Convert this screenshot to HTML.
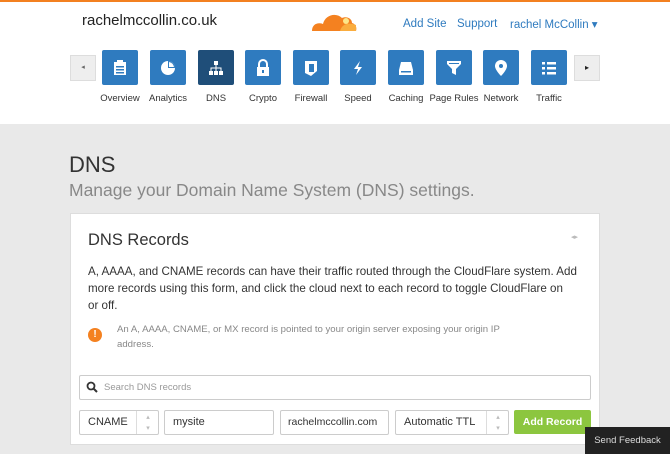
<!DOCTYPE html>
<html><head><style>
*{margin:0;padding:0;box-sizing:border-box}
body{width:670px;height:454px;overflow:hidden;font-family:"Liberation Sans",sans-serif;background:#e9e9e9;position:relative}
.a{position:absolute}
.hdr{left:0;top:0;width:670px;height:124px;background:#fff;border-top:2px solid #f38020}
.tile{width:36px;height:35px;top:50px;background:#2f7bbf;border-radius:2px}
.tile svg{position:absolute;left:9px;top:9px}
.lbl{top:93px;font-size:9.5px;color:#333;width:60px;text-align:center}
.box{background:#fff;border:1px solid #ccc;border-radius:2px;height:25px;top:410px;font-size:11px;color:#333;line-height:23px;padding-left:8px}
</style></head><body>
<div class="a hdr"></div>
<div class="a" style="left:82px;top:12px;font-size:15px;color:#222">rachelmccollin.co.uk</div>
<svg class="a" style="left:310px;top:9px" width="48" height="24" viewBox="0 0 48 24"><path d="M2 22 C2 15 8 13 13 15 C15 6 26 3 32 9 C36 7 42 9 42 14 C46 15 47 19 46 22 Z" fill="#f48120"/><path d="M30 22 C32 15 38 13 46 16 L46 22Z" fill="#faad3f"/><circle cx="36" cy="12" r="3" fill="#fde68a"/></svg>
<div class="a" style="left:403px;top:18px;font-size:11.5px;color:#2f7bbf">Add Site</div>
<div class="a" style="left:457px;top:18px;font-size:11.5px;color:#2f7bbf">Support</div>
<div class="a" style="left:510px;top:17px;font-size:11.5px;color:#2f7bbf">rachel McCollin ▾</div>
<div class="a" style="left:70px;top:55px;width:26px;height:26px;background:#eee;border:1px solid #ddd;font-size:7px;color:#666;text-align:center;line-height:24px">◂</div>
<div class="a" style="left:574px;top:55px;width:26px;height:26px;background:#eee;border:1px solid #ddd;font-size:8px;color:#222;text-align:center;line-height:24px">▸</div>

<div class="a tile" style="left:102px"><svg width="18" height="18"><rect x="3" y="3" width="12" height="13" fill="#fff"/><rect x="6" y="1" width="6" height="3" fill="#fff"/><rect x="5" y="7" width="8" height="1.5" fill="#2f7bbf"/><rect x="5" y="10" width="8" height="1.5" fill="#2f7bbf"/><rect x="5" y="13" width="8" height="1.5" fill="#2f7bbf"/></svg></div>
<div class="a tile" style="left:150px"><svg width="18" height="18"><circle cx="9" cy="9" r="7" fill="#fff"/><path d="M9 9V2A7 7 0 0 1 16 9Z" fill="#2f7bbf"/><path d="M10 8V3A6 6 0 0 1 15 8Z" fill="#fff"/></svg></div>
<div class="a tile" style="left:198px;background:#1f4e79"><svg width="18" height="18" fill="#fff"><rect x="7" y="2" width="4" height="4"/><rect x="2" y="12" width="4" height="4"/><rect x="7" y="12" width="4" height="4"/><rect x="12" y="12" width="4" height="4"/><rect x="8.5" y="6" width="1" height="6"/><rect x="3.5" y="8.5" width="11" height="1"/><rect x="3.5" y="8.5" width="1" height="4"/><rect x="13.5" y="8.5" width="1" height="4"/></svg></div>
<div class="a tile" style="left:245px"><svg width="18" height="18"><path d="M5 8V5a4 4 0 0 1 8 0v3" stroke="#fff" stroke-width="2" fill="none"/><rect x="3" y="8" width="12" height="9" fill="#fff"/><rect x="8" y="11" width="2" height="3" fill="#2f7bbf"/></svg></div>
<div class="a tile" style="left:293px"><svg width="18" height="18"><path d="M3 2h12v10l-6 5-6-3z" fill="#fff"/><rect x="7" y="5" width="5" height="8" fill="#2f7bbf"/></svg></div>
<div class="a tile" style="left:340px"><svg width="18" height="18"><path d="M11 2L5 10h4l-2 6 6-8H9z" fill="#fff"/></svg></div>
<div class="a tile" style="left:388px"><svg width="18" height="18"><path d="M4 3h10l2 8v5H2v-5z" fill="#fff"/><rect x="4" y="12" width="10" height="1.5" fill="#2f7bbf"/></svg></div>
<div class="a tile" style="left:436px"><svg width="18" height="18"><path d="M2 2h14v3l-5 5v6l-4-2v-4L2 5z" fill="#fff"/><rect x="4" y="4" width="10" height="1" fill="#2f7bbf"/></svg></div>
<div class="a tile" style="left:483px"><svg width="18" height="18"><path d="M9 1a6 6 0 0 1 6 6c0 4-6 10-6 10S3 11 3 7a6 6 0 0 1 6-6z" fill="#fff"/><circle cx="9" cy="7" r="2" fill="#2f7bbf"/></svg></div>
<div class="a tile" style="left:531px"><svg width="18" height="18" fill="#fff"><rect x="2" y="3" width="3" height="2.5"/><rect x="7" y="3" width="9" height="2.5"/><rect x="2" y="8" width="3" height="2.5"/><rect x="7" y="8" width="9" height="2.5"/><rect x="2" y="13" width="3" height="2.5"/><rect x="7" y="13" width="9" height="2.5"/></svg></div>

<div class="a lbl" style="left:90px">Overview</div>
<div class="a lbl" style="left:138px">Analytics</div>
<div class="a lbl" style="left:186px">DNS</div>
<div class="a lbl" style="left:233px">Crypto</div>
<div class="a lbl" style="left:281px">Firewall</div>
<div class="a lbl" style="left:328px">Speed</div>
<div class="a lbl" style="left:376px">Caching</div>
<div class="a lbl" style="left:424px">Page Rules</div>
<div class="a lbl" style="left:471px">Network</div>
<div class="a lbl" style="left:519px">Traffic</div>

<div class="a" style="left:69px;top:152px;font-size:22px;color:#333">DNS</div>
<div class="a" style="left:69px;top:180px;font-size:17.5px;color:#888">Manage your Domain Name System (DNS) settings.</div>

<div class="a" style="left:70px;top:213px;width:530px;height:232px;background:#fff;border:1px solid #ddd"></div>
<div class="a" style="left:88px;top:231px;font-size:16.5px;color:#333">DNS Records</div>
<div class="a" style="left:571px;top:233px;font-size:7px;color:#bbb">◂▸</div>
<div class="a" style="left:88px;top:263px;white-space:nowrap;font-size:11.6px;line-height:17px;color:#333">A, AAAA, and CNAME records can have their traffic routed through the CloudFlare system. Add<br>more records using this form, and click the cloud next to each record to toggle CloudFlare on<br>or off.</div>
<div class="a" style="left:88px;top:328px;width:14px;height:14px;border-radius:50%;background:#f48120;color:#fff;font-size:10px;font-weight:bold;text-align:center;line-height:14px">!</div>
<div class="a" style="left:117px;top:322px;white-space:nowrap;font-size:9.6px;line-height:15px;color:#888">An A, AAAA, CNAME, or MX record is pointed to your origin server exposing your origin IP<br>address.</div>

<div class="a" style="left:79px;top:375px;width:512px;height:25px;border:1px solid #ccc;border-radius:2px"></div>
<svg class="a" style="left:86px;top:381px" width="12" height="12"><circle cx="5" cy="5" r="3.5" stroke="#333" stroke-width="1.8" fill="none"/><path d="M7.5 7.5L11 11" stroke="#333" stroke-width="2"/></svg>
<div class="a" style="left:104px;top:382px;font-size:9.5px;color:#999">Search DNS records</div>

<div class="a box" style="left:79px;width:80px">CNAME<span style="position:absolute;left:56px;top:0;height:23px;border-left:1px solid #ddd;width:23px;text-align:center;color:#bbb;font-size:7px;line-height:11px;padding-top:1px">▴<br>▾</span></div>
<div class="a box" style="left:164px;width:110px">mysite</div>
<div class="a box" style="left:280px;width:109px;padding-left:7px;font-size:10.5px">rachelmccollin.com</div>
<div class="a box" style="left:395px;width:114px">Automatic TTL<span style="position:absolute;left:90px;top:0;height:23px;border-left:1px solid #ddd;width:23px;text-align:center;color:#bbb;font-size:7px;line-height:11px;padding-top:1px">▴<br>▾</span></div>
<div class="a" style="left:514px;top:410px;width:77px;height:24px;background:#8cc63f;border-radius:2px;color:#fff;font-size:10.5px;font-weight:bold;text-align:center;line-height:24px">Add Record</div>
<div class="a" style="left:585px;top:427px;width:85px;height:27px;background:#222;color:#ddd;font-size:9.5px;text-align:center;line-height:27px">Send Feedback</div>
</body></html>
